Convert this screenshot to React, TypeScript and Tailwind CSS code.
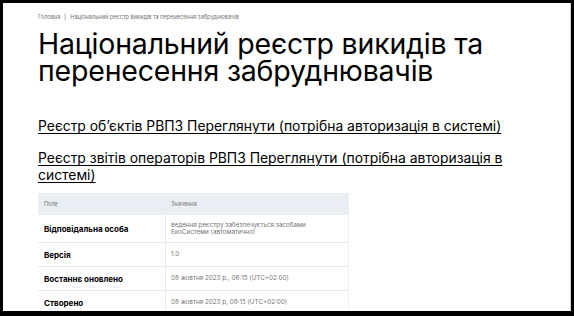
const rows = [
  { label: 'Відповідальна особа', value: 'ведення реєстру забезпечується засобами ЕкоСистеми (автоматично)', h: 'h-[28px]' },
  { label: 'Версія', value: '1.0', h: 'h-[24px]' },
  { label: 'Востаннє оновлено', value: '08 жовтня 2023 р., 08:15 (UTC+02:00)', h: 'h-[24px]' },
  { label: 'Створено', value: '08 жовтня 2023 р, 08:15 (UTC+02:00)', h: 'h-[24px]' },
];

export default function App() {
  return (
    <div className="h-[316px] w-[574px] overflow-hidden bg-black pt-[3px] pl-[3px] pr-[3px] pb-[5px] font-['Inter',sans-serif]">
      <div className="h-full overflow-hidden border-r border-neutral-300 bg-white pl-[35px]">
        <div className="flex items-center gap-[4px] pt-[10px] text-[5.6px] text-neutral-500">
          <span>Головна</span>
          <span className="text-neutral-600">|</span>
          <span>Національний реєстр викидів та перенесення забруднювачів</span>
        </div>

        <h1 className="mt-[9px] w-[480px] text-[28.5px] leading-[27px] tracking-[-0.2px] text-black">
          Національний реєстр викидів та перенесення забруднювачів
        </h1>

        <div className="mt-[34px] w-[490px] text-[13.9px] leading-[17px] text-black">
          <a className="underline underline-offset-2">Реєстр обʼєктів РВПЗ Переглянути (потрібна авторизація в системі)</a>
        </div>
        <div className="mt-[15px] w-[490px] text-[13.9px] leading-[17px] text-black">
          <a className="underline underline-offset-2">Реєстр звітів операторів РВПЗ Переглянути (потрібна авторизація в системі)</a>
        </div>

        <div className="mt-[9px] w-[311px] border-r border-[#eef1f4]">
          <div className="flex h-[22px] items-center bg-[#e8eef4] text-[5.5px] text-neutral-500">
            <div className="w-[128px] pl-[6px]">Поле</div>
            <div className="pl-[5px]">Значення</div>
          </div>
          {rows.map((r) => (
            <div key={r.label} className={`flex ${r.h} border-b border-[#e6e9ed]`}>
              <div className="flex w-[128px] items-center border-r border-[#e6e9ed] pl-[6px] text-[8px] font-bold text-black">
                {r.label}
              </div>
              <div className="flex flex-1 items-center pl-[5px] pr-[36px] text-[6.3px] leading-[7px] text-neutral-500">
                {r.value}
              </div>
            </div>
          ))}
        </div>
      </div>
    </div>
  );
}
